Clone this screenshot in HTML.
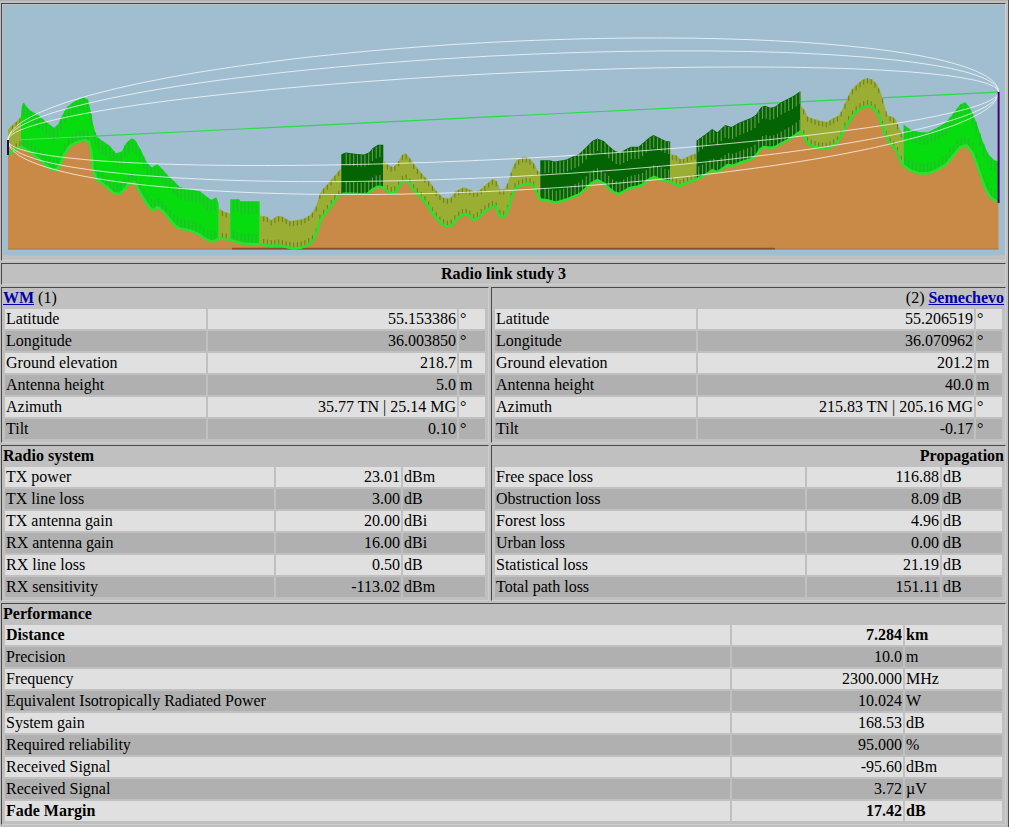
<!DOCTYPE html><html><head><meta charset="utf-8"><title>Radio link study 3</title><style>
html,body{margin:0;padding:0}
body{width:1009px;height:827px;position:relative;overflow:hidden;background:#c0c0c0;font-family:"Liberation Serif",serif;font-size:16px;line-height:18px;color:#000}
.c{position:absolute;box-sizing:border-box;border:1px solid;border-color:#484848 #cecece #cecece #484848}
.h{position:absolute;height:18px;white-space:nowrap}
.r{position:absolute;height:20px;box-sizing:border-box;padding:1px;white-space:nowrap;overflow:hidden}
.l{background:#e0e0e0}.k{background:#b0b0b0}
.v{text-align:right}
b{font-weight:bold}
a{color:#0000a8;text-decoration:underline}
</style></head><body>
<div style="position:absolute;left:0;top:0;width:1009px;height:1px;background:#b0b0b0"></div>
<div style="position:absolute;left:1008px;top:0;width:1px;height:827px;background:#505050"></div>
<div class="c" style="left:1px;top:3px;width:1005px;height:258px"></div>
<svg width="1002" height="251" viewBox="3 5 1002 251" style="position:absolute;left:3px;top:5px;display:block">
<rect x="3" y="5" width="1002" height="250.5" fill="#a0bed0"/>
<line x1="8" y1="140.3" x2="998.5" y2="92.2" stroke="#28dc48" stroke-width="1.2"/>
<polygon points="8,129.5 12.9,124.5 19.3,118.7 21,116 21,147.5 8,156" fill="#9aae34"/>
<polygon points="21,116 21.6,108 23.2,102.5 29.6,110 38.7,115.4 45,121 54,127.7 58,124.5 61.9,116 67,107 73.5,102 83.8,97.4 87.6,99.3 90.2,108.4 92.8,122.5 95.3,133 97.9,137.5 102.9,141.2 109.4,145.6 115.9,153.3 121.8,151.5 126,142.9 131.2,138.4 135,139.7 141.5,151.3 146.7,162.2 151.9,167.4 157,164 162,168.7 169.9,177.7 172.9,180 179.8,187 189.7,189.4 199.6,190.9 204.6,194.9 209.6,198.8 211.5,199.8 216.5,197.3 218.5,204 218.7,206.8 218.7,240.2 217.5,240.5 213.5,242.4 209.6,242 204.6,239.5 199.6,235.5 194.7,233.5 189.7,231.5 184.8,230.6 179.8,229.6 174.9,226.6 169.9,220.6 165,214.7 160,209.7 157,208.3 153,211.5 149.3,208.3 144,200.6 137.7,189 134.5,183.8 128.7,184.5 124.8,190.3 119.6,194.8 113.2,194 108,189 102.9,185 96.4,180 92.6,169.7 91.5,153 89,142.9 85,141 77.3,142.9 69.6,147.4 64.4,155 60.5,164.8 56.7,170.5 51.5,170.5 42.5,163.5 32,154.5 22,148 21,147.5" fill="#06dc0e"/>
<polygon points="218.7,208 219.5,208.7 224.4,211.7 229.4,213.2 230.2,213.5 230.2,241.2 229.4,241 221.4,239.5 218.7,240.2" fill="#9aae34"/>
<polygon points="230.2,199.3 239.3,199.3 240.3,201.3 259.7,201.3 259.7,245.4 251.5,245.2 241.3,244.4 239.3,243.4 230.2,241.2" fill="#06dc0e"/>
<polygon points="259.7,215.5 260.6,215.7 267,216.4 270.9,220.2 277.3,215.7 282.5,216.4 290.2,220.9 295.4,220.2 303.1,218.9 310.8,214.4 316,206.7 319.8,193.8 323.7,188 326.4,185.4 332.9,177.7 339.3,170 341.3,168.7 341.3,195.7 339.3,196.7 332.9,204.5 326.4,213.5 320,221.2 318.6,228.3 314.7,239.9 310.8,243.8 305.7,247 300.5,248.9 292.8,249.6 287.6,248.3 279.9,246.4 270.9,247 260.6,245.4 259.7,245.4" fill="#9aae34"/>
<polygon points="341.3,154.5 342.6,153.8 345.8,152.6 354.8,153.8 363.8,154.5 369,152.6 372.8,148 378,144.8 383.3,144.8 383.3,188.5 383.1,188.3 378,187.7 372.8,190.3 367.7,194.8 361.2,195.4 352.2,194.8 343.2,194.8 341.3,195.7" fill="#046404"/>
<polygon points="383.3,160.5 383.8,161 388.3,164.8 393.5,167.4 398.6,161 402.5,154.5 405.7,153.2 410.2,158.4 415.4,166 423.1,175 429.5,181.5 436,190.6 442.4,197 445.2,198.3 450.3,198.3 455.5,191.2 463.2,187.3 469.6,189.3 474.8,191.9 480,189.9 486.4,184.1 492.8,179 496.7,180.9 499.9,189.3 504.4,189.3 508.3,181.5 512.2,168.7 516,160.9 523.8,156.4 528.9,157.7 534.1,163.5 537.9,171.2 540.3,172.5 540.3,200.3 536.6,194.1 532.8,186.4 527.6,184.5 519.9,186.4 514.7,190.3 510.9,200.6 507,213.5 503.1,218.6 498.6,216 495.4,207 491.5,208.3 485.1,212.2 478.7,218.6 473.5,221.2 468.4,216 463.2,215.4 456.8,219.9 451.6,226.4 446.4,227.6 440,223.8 439.8,222.5 433.4,216 427,205.7 420.5,198 414,191.6 408.9,183.8 405,180.6 401.2,183.8 397.3,190.9 393.5,194.8 388.3,192.9 383.3,188.5" fill="#9aae34"/>
<polygon points="540.3,160.3 541.8,160.3 549.5,160.3 554.7,161.6 562.4,160.3 566.4,159.6 572.9,156.4 579.3,153.8 585.8,147.4 592.2,140.9 597.4,138.4 603.8,140.9 609,146.1 615.4,151.2 620.6,152.5 625.7,149.3 630.9,146.7 638.6,146.7 643.8,142.2 648.9,137.7 653.4,135.1 659.2,137.7 665.7,140.9 670.2,141.6 670.2,182.8 669.5,182.5 665.7,181.9 659.2,179.9 654.1,178 648.9,180.6 642.5,185.7 637.3,187.7 629.6,189 624.4,192.2 619.3,194.8 614.1,193.5 607.7,188.3 602.5,183.8 597.4,181.2 592.2,183.8 585.8,189.6 579.3,195.4 572.9,198 566.4,200.6 560,202.5 556,203.8 549.5,201.9 540.5,200.6 540.3,200.3" fill="#046404"/>
<polygon points="670.2,154.5 676,155.1 681.1,159.6 686.4,157.3 692.9,154.1 696.5,153.5 696.5,180.3 686.4,184 680,187 676,185.7 670.2,182.8" fill="#9aae34"/>
<polygon points="696.5,140.5 697.4,139.9 705.8,134.1 712.2,129 717.4,132.2 725.1,125.1 731.5,127 738,123.2 744.4,120.6 750.9,118 756,114.8 761.2,107 765,105.8 770.2,107.7 775.4,106.4 780.5,102.6 787,99.3 793.4,96.1 799.8,91.6 800.5,91.6 800.5,132.8 798.6,133.8 793.4,137.7 787,141.6 780.5,144.8 775.4,148 770.2,148.7 763.8,148 759.9,150.6 756,157 750.9,160.2 744.4,162.2 738,164.8 732.8,166.7 727.7,166 722.5,169.9 717.4,173.1 712.2,171.2 705.8,175.7 696.8,180.2 696.5,180.3" fill="#046404"/>
<polygon points="800.5,105 801.1,105.8 803.9,109 807.7,116.7 812.9,118.6 819.3,120.6 827,121.9 832.2,118.6 838.7,115.4 842.5,109 846.4,100 851.5,89.6 856.7,84.5 861.9,80 867,78 872.2,79.3 877.3,84.5 881.2,93.5 885.1,107.7 887.6,115.4 892.8,116.7 896,119.9 899.2,128.3 903.5,136 903.5,166.4 902,165.3 898,155.3 895.4,149.9 890.2,144.8 886.3,138.3 882.5,128 878.6,116.4 873.5,109.3 868.3,106.7 861.9,108.7 855.4,113.8 850.3,120.3 845.1,129.3 841.2,137 837.4,143.5 832.2,147.3 825.8,149.9 819.3,149.3 812.9,147.3 807.7,144.8 803.9,137.5 801,132.5 800.5,132.8" fill="#9aae34"/>
<polygon points="903.5,124.5 910,129.2 920,132.2 928,132.2 936.2,128.2 946.2,122.2 954.2,112.2 960.2,104.2 965.3,102.2 970.3,108.2 976.3,122.2 982.3,140.3 988.3,154.3 994.3,160.3 998.5,161.3 998.5,203.5 998.4,203.5 990.3,198.4 984.3,187.4 978.3,169.4 972.3,153.3 966.3,146.3 960.2,148.3 954.2,155.3 946.2,165.3 936.2,171.4 928,174.4 920,174.4 910,171.4 903.5,166.4" fill="#06dc0e"/>
<path d="M12.4 125.5v5M12.4 146.1v6M16.2 122v5M16.2 143.6v6M19.9 118.2v5M19.9 141.2v6" stroke="#6f7f28" stroke-width="1.1" fill="none"/>
<path d="M23.7 103.6v12M23.7 138.1v10M27.4 108v12M27.4 140.5v10M31.2 111.4v12M31.2 143v10M35 113.7v12M35 146v10M38.7 115.9v12M38.7 149.2v10M42.5 119.2v12M42.5 152.5v10M46.2 122.4v12M46.2 155.4v10M50 125.2v12M50 158.3v10M53.7 128v12M53.7 159.5v10M57.5 125.4v12M57.5 158.4v10M61.2 118v12M61.2 152v10M65 111.1v12M65 143.2v10M68.7 106.2v12M68.7 137.7v10M72.5 103.3v12M72.5 134.7v10M76.2 101.3v12M76.2 132.5v10M80 99.6v12M80 131.2v10M83.7 97.9v12M83.7 130.3v10M87.5 99.7v12M87.5 131.2v10M91.2 114.3v12M91.2 140.8v10M95 132v12M95 165.1v10M98.7 138.6v12M98.7 170.8v10M102.5 141.4v12M102.5 173.7v10M106.2 143.9v12M106.2 176.6v10M110 146.8v12M110 179.9v10M113.7 151.2v12M113.7 183.1v10M117.5 153.3v12M117.5 183.5v10M121.2 152.2v12M121.2 182.4v10M125 145.6v12M125 179.1v10M128.7 141.1v12M128.7 173.5v10M132.4 139.3v12M132.4 173v10M136.2 142.3v12M136.2 175.6v10M139.9 149v12M139.9 182.1v10M143.7 156.4v12M143.7 189v10M147.4 163.4v12M147.4 194.6v10M151.2 167.2v12M151.2 198.9v10M154.9 165.9v12M154.9 198.9v10M158.7 166.1v12M158.7 198.1v10M162.4 169.7v12M162.4 201.1v10M166.2 174v12M166.2 205.1v10M169.9 178.2v12M169.9 209.7v10M173.7 181.3v12M173.7 214.2v10M177.4 185.1v12M177.4 217.2v10M181.2 187.8v12M181.2 218.9v10M184.9 188.7v12M184.9 219.6v10M188.7 189.7v12M188.7 220.3v10M192.4 190.3v12M192.4 221.6v10M196.2 190.9v12M196.2 223.1v10M199.9 191.7v12M199.9 224.8v10M203.7 194.7v12M203.7 227.8v10M207.4 197.6v12M207.4 229.9v10M211.2 200.1v12M211.2 231.2v10M214.9 198.6v12M214.9 230.7v10" stroke="#22be2e" stroke-width="1.5" fill="none"/>
<path d="M222.4 211v5M222.4 232.7v6M226.2 212.7v5M226.2 233.4v6" stroke="#6f7f28" stroke-width="1.1" fill="none"/>
<path d="M233.7 199.8v12M233.7 231v10M237.4 199.8v12M237.4 232v10M241.2 201.8v12M241.2 233.3v10M244.9 201.8v12M244.9 233.7v10M248.7 201.8v12M248.7 234v10M252.4 201.8v12M252.4 234.2v10M256.2 201.8v12M256.2 234.3v10" stroke="#22be2e" stroke-width="1.5" fill="none"/>
<path d="M263.7 216.5v5M263.7 238.9v6M267.4 217.3v5M267.4 239.5v6M271.2 220.5v5M271.2 240v6M274.9 217.9v5M274.9 239.7v6M278.7 216.4v5M278.7 239.5v6M282.4 216.9v5M282.4 240v6M286.2 219.1v5M286.2 241v6M289.9 221.3v5M289.9 241.9v6M293.7 220.9v5M293.7 242.5v6M297.4 220.4v5M297.4 242.2v6M301.2 219.7v5M301.2 241.6v6M304.9 218.3v5M304.9 240.3v6M308.7 216.1v5M308.7 238.1v6M312.4 212.5v5M312.4 235.2v6M316.2 206.5v5M316.2 228.4v6M319.9 194.1v5M319.9 214.5v6M323.7 188.5v5M323.7 209.7v6M327.4 184.7v5M327.4 205v6M331.2 180.2v5M331.2 199.9v6M334.9 175.7v5M334.9 195v6M338.7 171.2v5M338.7 190.4v6" stroke="#6f7f28" stroke-width="1.1" fill="none"/>
<path d="M346.2 153.2v12M346.2 181.8v12M349.9 153.7v12M349.9 181.8v12M353.7 154.2v12M353.7 181.9v12M357.4 154.5v12M357.4 182.2v12M361.2 154.8v12M361.2 182.4v12M364.9 154.6v12M364.9 182.1v12M368.7 153.2v12M368.7 180.9v12M372.4 148.9v12M372.4 177.6v12M376.2 146.4v12M376.2 175.6v12M379.9 145.3v12M379.9 174.9v12" stroke="#669e4e" stroke-width="1.1" fill="none"/>
<path d="M387.4 164.6v5M387.4 185.1v6M391.2 166.8v5M391.2 187v6M394.9 166.1v5M394.9 186.3v6M398.7 161.3v5M398.7 181.4v6M402.4 155.1v5M402.4 175.7v6M406.2 154.3v5M406.2 174.6v6M409.9 158.6v5M409.9 178.4v6M413.7 164v5M413.7 184.1v6M417.4 168.9v5M417.4 188v6M421.2 173.3v5M421.2 191.8v6M424.9 177.4v5M424.9 196.3v6M428.7 181.2v5M428.7 201.4v6M432.4 186.1v5M432.4 207.5v6M436.2 191.3v5M436.2 211.8v6M439.9 195.1v5M439.9 216.5v6M443.7 198.1v5M443.7 219v6M447.4 198.8v5M447.4 220.4v6M451.2 197.6v5M451.2 219.5v6M454.9 192.5v5M454.9 215.2v6M458.7 190.1v5M458.7 211.6v6M462.4 188.2v5M462.4 208.9v6M466.2 188.7v5M466.2 208.7v6M469.9 190v5M469.9 210.6v6M473.7 191.8v5M473.7 214.1v6M477.4 191.4v5M477.4 212.2v6M481.2 189.3v5M481.2 209.1v6M484.9 185.9v5M484.9 205.4v6M488.7 182.8v5M488.7 203v6M492.4 179.8v5M492.4 201v6M496.2 181.2v5M496.2 202.2v6M499.9 189.8v5M499.9 209.8v6M503.7 189.8v5M503.7 210.8v6M507.4 183.7v5M507.4 205v6M511.2 172.5v5M511.2 192.8v6M515 163.6v5M515 183.1v6M518.7 159.8v5M518.7 180.3v6M522.5 157.7v5M522.5 178.8v6M526.2 157.5v5M526.2 177.8v6M530 159.4v5M530 178.4v6M533.7 163.6v5M533.7 181.2v6M537.5 170.8v5M537.5 188.5v6" stroke="#6f7f28" stroke-width="1.1" fill="none"/>
<path d="M545 160.8v12M545 188.2v12M548.7 160.8v12M548.7 188.8v12M552.5 161.5v12M552.5 189.8v12M556.2 161.8v12M556.2 190.7v12M560 161.2v12M560 189.5v12M563.7 160.6v12M563.7 188.4v12M567.5 159.6v12M567.5 187.2v12M571.2 157.7v12M571.2 185.7v12M575 156.1v12M575 184.2v12M578.7 154.5v12M578.7 182.6v12M582.5 151.2v12M582.5 179.6v12M586.2 147.5v12M586.2 176.2v12M590 143.7v12M590 172.8v12M593.7 140.7v12M593.7 170v12M597.5 138.9v12M597.5 168.2v12M601.2 140.4v12M601.2 170.1v12M605 142.6v12M605 172.9v12M608.7 146.3v12M608.7 176.1v12M612.5 149.3v12M612.5 179.2v12M616.2 151.9v12M616.2 181v12M620 152.8v12M620 181.5v12M623.7 151.1v12M623.7 179.6v12M627.5 148.9v12M627.5 177.3v12M631.2 147.2v12M631.2 175.7v12M635 147.2v12M635 175.1v12M638.7 147.1v12M638.7 174.2v12M642.5 143.9v12M642.5 172.7v12M646.2 140.6v12M646.2 169.8v12M650 137.6v12M650 167.1v12M653.7 135.7v12M653.7 165.2v12M657.5 137.4v12M657.5 166.2v12M661.2 139.2v12M661.2 167.5v12M665 141v12M665 168.7v12M668.7 141.9v12M668.7 169.4v12" stroke="#669e4e" stroke-width="1.1" fill="none"/>
<path d="M672.5 155.2v5M672.5 177v6M676.2 155.8v5M676.2 178.8v6M680 159.1v5M680 180v6M683.7 159v5M683.7 178.3v6M687.5 157.3v5M687.5 176.6v6M691.2 155.4v5M691.2 175.2v6M695 154.3v5M695 173.9v6" stroke="#6f7f28" stroke-width="1.1" fill="none"/>
<path d="M698.7 139.5v12M698.7 166.2v12M702.5 136.9v12M702.5 164.4v12M706.2 134.3v12M706.2 162.4v12M710 131.3v12M710 159.8v12M713.7 130.4v12M713.7 158.7v12M717.5 132.7v12M717.5 160.1v12M721.2 129.2v12M721.2 157.7v12M725 125.7v12M725 155.1v12M728.7 126.7v12M728.7 153.1v12M732.5 126.9v12M732.5 153.7v12M736.2 124.8v12M736.2 152.5v12M740 122.9v12M740 151v12M743.7 121.4v12M743.7 149.5v12M747.5 119.9v12M747.5 148.3v12M751.2 118.3v12M751.2 147v12M755 116v12M755 144.7v12M758.7 111.2v12M758.7 139.6v12M762.5 107.1v12M762.5 135.9v12M766.2 106.7v12M766.2 135.3v12M770 108.1v12M770 135.7v12M773.7 107.3v12M773.7 135.2v12M777.5 105.4v12M777.5 133.7v12M781.2 102.7v12M781.2 131.5v12M785 100.8v12M785 129.6v12M788.7 98.9v12M788.7 127.6v12M792.5 97.1v12M792.5 125.3v12M796.2 94.6v12M796.2 122.6v12M800 92.1v12M800 120.1v12" stroke="#669e4e" stroke-width="1.1" fill="none"/>
<path d="M803.7 109.3v5M803.7 130.2v6M807.5 116.7v5M807.5 137.3v6M811.2 118.5v5M811.2 139.5v6M815 119.7v5M815 140.9v6M818.7 120.9v5M818.7 142.1v6M822.5 121.6v5M822.5 142.6v6M826.2 122.3v5M826.2 142.7v6M830 120.5v5M830 141.2v6M833.7 118.4v5M833.7 139.2v6M837.5 116.5v5M837.5 136.4v6M841.2 111.7v5M841.2 130v6M845 103.8v5M845 122.6v6M848.7 95.8v5M848.7 116.1v6M852.5 89.2v5M852.5 110.6v6M856.2 85.5v5M856.2 106.2v6M860 82.2v5M860 103.2v6M863.7 79.8v5M863.7 101.1v6M867.5 78.6v5M867.5 100v6M871.2 79.5v5M871.2 101.2v6M875 82.6v5M875 104.3v6M878.7 88.2v5M878.7 109.7v6M882.5 98.6v5M882.5 120.9v6M886.2 111.6v5M886.2 131v6M890 116.5v5M890 137.4v6M893.7 118.1v5M893.7 141.2v6M897.5 124.2v5M897.5 147.2v6M901.2 132.4v5M901.2 156.3v6" stroke="#6f7f28" stroke-width="1.1" fill="none"/>
<path d="M905 126v12M905 156.5v10M908.7 128.8v12M908.7 159.4v10M912.5 130.4v12M912.5 161.1v10M916.2 131.6v12M916.2 162.3v10M920 132.7v12M920 163.4v10M923.7 132.7v12M923.7 163.4v10M927.5 132.7v12M927.5 163.4v10M931.2 131.1v12M931.2 162.2v10M935 129.3v12M935 160.9v10M938.7 127.2v12M938.7 158.9v10M942.5 125v12M942.5 156.6v10M946.2 122.7v12M946.2 154.3v10M950 118v12M950 149.6v10M953.7 113.3v12M953.7 144.9v10M957.5 108.4v12M957.5 140.5v10M961.2 104.3v12M961.2 137v10M965 102.8v12M965 135.7v10M968.7 106.8v12M968.7 138.1v10M972.5 113.7v12M972.5 142.7v10M976.2 122.5v12M976.2 152.8v10M980 133.7v12M980 163.4v10M983.7 144.1v12M983.7 174.6v10M987.5 152.8v12M987.5 182.2v10M991.2 157.7v12M991.2 188v10M995 161v12M995 190.3v10" stroke="#22be2e" stroke-width="1.5" fill="none"/>
<polygon points="8,155 21,146.5 22,147 32,153.5 42.5,162.5 51.5,169.5 56.7,169.5 60.5,163.8 64.4,154 69.6,146.4 77.3,141.9 85,140 89,141.9 91.5,152 92.6,168.7 96.4,179 102.9,184 108,188 113.2,193 119.6,193.8 124.8,189.3 128.7,183.5 134.5,182.8 137.7,188 144,199.6 149.3,207.3 153,210.5 157,207.3 160,208.7 165,213.7 169.9,219.6 174.9,225.6 179.8,228.6 184.8,229.6 189.7,230.5 194.7,232.5 199.6,234.5 204.6,238.5 209.6,241 213.5,241.4 217.5,239.5 221.4,238.5 229.4,240 239.3,242.4 241.3,243.4 251.5,244.2 260.6,244.4 270.9,246 279.9,245.4 287.6,247.3 292.8,248.6 300.5,247.9 305.7,246 310.8,242.8 314.7,238.9 318.6,227.3 320,220.2 326.4,212.5 332.9,203.5 339.3,195.7 343.2,193.8 352.2,193.8 361.2,194.4 367.7,193.8 372.8,189.3 378,186.7 383.1,187.3 388.3,191.9 393.5,193.8 397.3,189.9 401.2,182.8 405,179.6 408.9,182.8 414,190.6 420.5,197 427,204.7 433.4,215 439.8,221.5 440,222.8 446.4,226.6 451.6,225.4 456.8,218.9 463.2,214.4 468.4,215 473.5,220.2 478.7,217.6 485.1,211.2 491.5,207.3 495.4,206 498.6,215 503.1,217.6 507,212.5 510.9,199.6 514.7,189.3 519.9,185.4 527.6,183.5 532.8,185.4 536.6,193.1 540.5,199.6 549.5,200.9 556,202.8 560,201.5 566.4,199.6 572.9,197 579.3,194.4 585.8,188.6 592.2,182.8 597.4,180.2 602.5,182.8 607.7,187.3 614.1,192.5 619.3,193.8 624.4,191.2 629.6,188 637.3,186.7 642.5,184.7 648.9,179.6 654.1,177 659.2,178.9 665.7,180.9 669.5,181.5 676,184.7 680,186 686.4,183 696.8,179.2 705.8,174.7 712.2,170.2 717.4,172.1 722.5,168.9 727.7,165 732.8,165.7 738,163.8 744.4,161.2 750.9,159.2 756,156 759.9,149.6 763.8,147 770.2,147.7 775.4,147 780.5,143.8 787,140.6 793.4,136.7 798.6,132.8 801,131.5 803.9,136.5 807.7,143.8 812.9,146.3 819.3,148.3 825.8,148.9 832.2,146.3 837.4,142.5 841.2,136 845.1,128.3 850.3,119.3 855.4,112.8 861.9,107.7 868.3,105.7 873.5,108.3 878.6,115.4 882.5,127 886.3,137.3 890.2,143.8 895.4,148.9 898,154.3 902,164.3 910,170.4 920,173.4 928,173.4 936.2,170.4 946.2,164.3 954.2,154.3 960.2,147.3 966.3,145.3 972.3,152.3 978.3,168.4 984.3,186.4 990.3,197.4 998.4,202.5 998.5,249.5 8,249.5" fill="#c98a48"/>
<path d="M8 248.9H998.5" stroke="#b07a40" stroke-width="1"/>
<path d="M232 248.6H775" stroke="#8a4f28" stroke-width="1.7"/>
<polyline points="8,155 21,146.5 22,147 32,153.5 42.5,162.5 51.5,169.5 56.7,169.5 60.5,163.8 64.4,154 69.6,146.4 77.3,141.9 85,140 89,141.9 91.5,152 92.6,168.7 96.4,179 102.9,184 108,188 113.2,193 119.6,193.8 124.8,189.3 128.7,183.5 134.5,182.8 137.7,188 144,199.6 149.3,207.3 153,210.5 157,207.3 160,208.7 165,213.7 169.9,219.6 174.9,225.6 179.8,228.6 184.8,229.6 189.7,230.5 194.7,232.5 199.6,234.5 204.6,238.5 209.6,241 213.5,241.4 217.5,239.5 221.4,238.5 229.4,240 239.3,242.4 241.3,243.4 251.5,244.2 260.6,244.4 270.9,246 279.9,245.4 287.6,247.3 292.8,248.6 300.5,247.9 305.7,246 310.8,242.8 314.7,238.9 318.6,227.3 320,220.2 326.4,212.5 332.9,203.5 339.3,195.7 343.2,193.8 352.2,193.8 361.2,194.4 367.7,193.8 372.8,189.3 378,186.7 383.1,187.3 388.3,191.9 393.5,193.8 397.3,189.9 401.2,182.8 405,179.6 408.9,182.8 414,190.6 420.5,197 427,204.7 433.4,215 439.8,221.5 440,222.8 446.4,226.6 451.6,225.4 456.8,218.9 463.2,214.4 468.4,215 473.5,220.2 478.7,217.6 485.1,211.2 491.5,207.3 495.4,206 498.6,215 503.1,217.6 507,212.5 510.9,199.6 514.7,189.3 519.9,185.4 527.6,183.5 532.8,185.4 536.6,193.1 540.5,199.6 549.5,200.9 556,202.8 560,201.5 566.4,199.6 572.9,197 579.3,194.4 585.8,188.6 592.2,182.8 597.4,180.2 602.5,182.8 607.7,187.3 614.1,192.5 619.3,193.8 624.4,191.2 629.6,188 637.3,186.7 642.5,184.7 648.9,179.6 654.1,177 659.2,178.9 665.7,180.9 669.5,181.5 676,184.7 680,186 686.4,183 696.8,179.2 705.8,174.7 712.2,170.2 717.4,172.1 722.5,168.9 727.7,165 732.8,165.7 738,163.8 744.4,161.2 750.9,159.2 756,156 759.9,149.6 763.8,147 770.2,147.7 775.4,147 780.5,143.8 787,140.6 793.4,136.7 798.6,132.8 801,131.5 803.9,136.5 807.7,143.8 812.9,146.3 819.3,148.3 825.8,148.9 832.2,146.3 837.4,142.5 841.2,136 845.1,128.3 850.3,119.3 855.4,112.8 861.9,107.7 868.3,105.7 873.5,108.3 878.6,115.4 882.5,127 886.3,137.3 890.2,143.8 895.4,148.9 898,154.3 902,164.3 910,170.4 920,173.4 928,173.4 936.2,170.4 946.2,164.3 954.2,154.3 960.2,147.3 966.3,145.3 972.3,152.3 978.3,168.4 984.3,186.4 990.3,197.4 998.4,202.5" fill="none" stroke="#2ee02e" stroke-width="2.6" stroke-linejoin="round"/>
<polygon points="8,140.3 8.1,139.6 8.2,138.9 8.5,138.2 9,137.6 9.5,136.9 10.2,136.1 11,135.4 11.9,134.7 12.9,134 14.1,133.3 15.4,132.5 16.8,131.8 18.3,131.1 19.9,130.3 21.7,129.6 23.6,128.9 25.6,128.1 27.7,127.3 29.9,126.6 32.2,125.8 34.7,125.1 37.3,124.3 40,123.5 42.8,122.8 45.7,122 48.7,121.2 51.9,120.5 55.1,119.7 58.5,118.9 62,118.2 65.6,117.4 69.3,116.6 73.1,115.8 77,115.1 81,114.3 85.1,113.5 89.3,112.7 93.6,112 98.1,111.2 102.6,110.4 107.2,109.7 111.9,108.9 116.7,108.1 121.7,107.4 126.7,106.6 131.8,105.9 136.9,105.1 142.2,104.3 147.6,103.6 153.1,102.9 158.6,102.1 164.2,101.4 169.9,100.6 175.7,99.9 181.6,99.2 187.6,98.4 193.6,97.7 199.7,97 205.9,96.3 212.1,95.6 218.5,94.9 224.9,94.2 231.3,93.5 237.9,92.8 244.5,92.2 251.1,91.5 257.9,90.8 264.7,90.2 271.5,89.5 278.4,88.9 285.4,88.2 292.4,87.6 299.4,87 306.6,86.3 313.7,85.7 320.9,85.1 328.2,84.5 335.5,83.9 342.8,83.4 350.2,82.8 357.6,82.2 365.1,81.7 372.6,81.1 380.1,80.6 387.6,80.1 395.2,79.5 402.8,79 410.4,78.5 418.1,78 425.8,77.5 433.5,77.1 441.2,76.6 448.9,76.1 456.6,75.7 464.4,75.3 472.2,74.8 479.9,74.4 487.7,74 495.5,73.6 503.2,73.3 511,72.9 518.8,72.5 526.6,72.2 534.3,71.8 542.1,71.5 549.9,71.2 557.6,70.9 565.3,70.6 573,70.3 580.7,70 588.4,69.8 596.1,69.5 603.7,69.3 611.3,69 618.9,68.8 626.4,68.6 633.9,68.4 641.4,68.2 648.9,68.1 656.3,67.9 663.7,67.8 671,67.6 678.3,67.5 685.6,67.4 692.8,67.3 699.9,67.2 707.1,67.2 714.1,67.1 721.1,67.1 728.1,67 735,67 741.8,67 748.6,67 755.4,67 762,67 768.6,67.1 775.2,67.1 781.6,67.2 788,67.2 794.4,67.3 800.6,67.4 806.8,67.5 812.9,67.7 818.9,67.8 824.9,67.9 830.8,68.1 836.6,68.3 842.3,68.4 847.9,68.6 853.4,68.8 858.9,69.1 864.3,69.3 869.6,69.5 874.7,69.8 879.8,70 884.8,70.3 889.8,70.6 894.6,70.9 899.3,71.2 903.9,71.5 908.4,71.8 912.9,72.2 917.2,72.5 921.4,72.9 925.5,73.3 929.5,73.7 933.4,74.1 937.2,74.5 940.9,74.9 944.5,75.3 948,75.7 951.4,76.2 954.6,76.6 957.8,77.1 960.8,77.6 963.7,78.1 966.5,78.6 969.2,79.1 971.8,79.6 974.3,80.1 976.6,80.6 978.8,81.2 980.9,81.7 982.9,82.3 984.8,82.8 986.6,83.4 988.2,84 989.7,84.6 991.1,85.2 992.4,85.8 993.6,86.4 994.6,87 995.5,87.6 996.3,88.3 997,88.9 997.5,89.5 998,90.2 998.3,90.9 998.4,91.5 998.5,92.2 998.5,92.2 998.4,92.9 998.3,93.6 998,94.3 997.5,94.9 997,95.6 996.3,96.4 995.5,97.1 994.6,97.8 993.6,98.5 992.4,99.2 991.1,100 989.7,100.7 988.2,101.4 986.6,102.2 984.8,102.9 982.9,103.6 980.9,104.4 978.8,105.2 976.6,105.9 974.3,106.7 971.8,107.4 969.2,108.2 966.5,109 963.7,109.7 960.8,110.5 957.8,111.3 954.6,112 951.4,112.8 948,113.6 944.5,114.3 940.9,115.1 937.2,115.9 933.4,116.7 929.5,117.4 925.5,118.2 921.4,119 917.2,119.8 912.9,120.5 908.4,121.3 903.9,122.1 899.3,122.8 894.6,123.6 889.8,124.4 884.8,125.1 879.8,125.9 874.7,126.6 869.6,127.4 864.3,128.2 858.9,128.9 853.4,129.6 847.9,130.4 842.3,131.1 836.6,131.9 830.8,132.6 824.9,133.3 818.9,134.1 812.9,134.8 806.8,135.5 800.6,136.2 794.4,136.9 788,137.6 781.6,138.3 775.2,139 768.6,139.7 762,140.3 755.4,141 748.6,141.7 741.8,142.3 735,143 728.1,143.6 721.1,144.3 714.1,144.9 707.1,145.5 699.9,146.2 692.8,146.8 685.6,147.4 678.3,148 671,148.6 663.7,149.1 656.3,149.7 648.9,150.3 641.4,150.8 633.9,151.4 626.4,151.9 618.9,152.4 611.3,153 603.7,153.5 596.1,154 588.4,154.5 580.7,155 573,155.4 565.3,155.9 557.6,156.4 549.9,156.8 542.1,157.2 534.3,157.7 526.6,158.1 518.8,158.5 511,158.9 503.2,159.2 495.5,159.6 487.7,160 479.9,160.3 472.2,160.7 464.4,161 456.6,161.3 448.9,161.6 441.2,161.9 433.5,162.2 425.8,162.5 418.1,162.7 410.4,163 402.8,163.2 395.2,163.5 387.6,163.7 380.1,163.9 372.6,164.1 365.1,164.3 357.6,164.4 350.2,164.6 342.8,164.7 335.5,164.9 328.2,165 320.9,165.1 313.7,165.2 306.6,165.3 299.4,165.3 292.4,165.4 285.4,165.4 278.4,165.5 271.5,165.5 264.7,165.5 257.9,165.5 251.1,165.5 244.5,165.5 237.9,165.4 231.3,165.4 224.9,165.3 218.5,165.3 212.1,165.2 205.9,165.1 199.7,165 193.6,164.8 187.6,164.7 181.6,164.6 175.7,164.4 169.9,164.2 164.2,164.1 158.6,163.9 153.1,163.7 147.6,163.4 142.2,163.2 136.9,163 131.8,162.7 126.7,162.5 121.7,162.2 116.7,161.9 111.9,161.6 107.2,161.3 102.6,161 98.1,160.7 93.6,160.3 89.3,160 85.1,159.6 81,159.2 77,158.8 73.1,158.4 69.3,158 65.6,157.6 62,157.2 58.5,156.8 55.1,156.3 51.9,155.9 48.7,155.4 45.7,154.9 42.8,154.4 40,153.9 37.3,153.4 34.7,152.9 32.2,152.4 29.9,151.9 27.7,151.3 25.6,150.8 23.6,150.2 21.7,149.7 19.9,149.1 18.3,148.5 16.8,147.9 15.4,147.3 14.1,146.7 12.9,146.1 11.9,145.5 11,144.9 10.2,144.2 9.5,143.6 9,143 8.5,142.3 8.2,141.6 8.1,141 8,140.3" fill="none" stroke="#ffffff" stroke-width="0.8" stroke-opacity="0.9"/>
<polygon points="8,140.3 8.1,139.3 8.2,138.4 8.5,137.4 9,136.4 9.5,135.5 10.2,134.5 11,133.5 11.9,132.5 12.9,131.5 14.1,130.5 15.4,129.5 16.8,128.5 18.3,127.5 19.9,126.5 21.7,125.4 23.6,124.4 25.6,123.4 27.7,122.4 29.9,121.4 32.2,120.3 34.7,119.3 37.3,118.3 40,117.3 42.8,116.2 45.7,115.2 48.7,114.2 51.9,113.1 55.1,112.1 58.5,111.1 62,110.1 65.6,109.1 69.3,108 73.1,107 77,106 81,105 85.1,104 89.3,103 93.6,102 98.1,101 102.6,100 107.2,99 111.9,98 116.7,97 121.7,96 126.7,95.1 131.8,94.1 136.9,93.1 142.2,92.2 147.6,91.2 153.1,90.3 158.6,89.3 164.2,88.4 169.9,87.5 175.7,86.5 181.6,85.6 187.6,84.7 193.6,83.8 199.7,82.9 205.9,82.1 212.1,81.2 218.5,80.3 224.9,79.5 231.3,78.6 237.9,77.8 244.5,77 251.1,76.2 257.9,75.4 264.7,74.6 271.5,73.8 278.4,73 285.4,72.2 292.4,71.5 299.4,70.7 306.6,70 313.7,69.3 320.9,68.6 328.2,67.9 335.5,67.2 342.8,66.5 350.2,65.9 357.6,65.2 365.1,64.6 372.6,64 380.1,63.3 387.6,62.7 395.2,62.2 402.8,61.6 410.4,61 418.1,60.5 425.8,60 433.5,59.4 441.2,58.9 448.9,58.5 456.6,58 464.4,57.5 472.2,57.1 479.9,56.7 487.7,56.2 495.5,55.8 503.2,55.5 511,55.1 518.8,54.7 526.6,54.4 534.3,54.1 542.1,53.8 549.9,53.5 557.6,53.2 565.3,52.9 573,52.7 580.7,52.4 588.4,52.2 596.1,52 603.7,51.8 611.3,51.7 618.9,51.5 626.4,51.4 633.9,51.3 641.4,51.2 648.9,51.1 656.3,51 663.7,50.9 671,50.9 678.3,50.9 685.6,50.9 692.8,50.9 699.9,50.9 707.1,50.9 714.1,51 721.1,51.1 728.1,51.2 735,51.3 741.8,51.4 748.6,51.5 755.4,51.7 762,51.8 768.6,52 775.2,52.2 781.6,52.4 788,52.7 794.4,52.9 800.6,53.2 806.8,53.5 812.9,53.8 818.9,54.1 824.9,54.4 830.8,54.7 836.6,55.1 842.3,55.5 847.9,55.9 853.4,56.3 858.9,56.7 864.3,57.1 869.6,57.5 874.7,58 879.8,58.5 884.8,59 889.8,59.5 894.6,60 899.3,60.5 903.9,61.1 908.4,61.6 912.9,62.2 917.2,62.8 921.4,63.4 925.5,64 929.5,64.6 933.4,65.2 937.2,65.9 940.9,66.5 944.5,67.2 948,67.9 951.4,68.6 954.6,69.3 957.8,70 960.8,70.8 963.7,71.5 966.5,72.3 969.2,73 971.8,73.8 974.3,74.6 976.6,75.4 978.8,76.2 980.9,77 982.9,77.8 984.8,78.7 986.6,79.5 988.2,80.4 989.7,81.2 991.1,82.1 992.4,83 993.6,83.9 994.6,84.8 995.5,85.7 996.3,86.6 997,87.5 997.5,88.4 998,89.4 998.3,90.3 998.4,91.2 998.5,92.2 998.5,92.2 998.4,93.2 998.3,94.1 998,95.1 997.5,96.1 997,97 996.3,98 995.5,99 994.6,100 993.6,101 992.4,102 991.1,103 989.7,104 988.2,105 986.6,106 984.8,107.1 982.9,108.1 980.9,109.1 978.8,110.1 976.6,111.1 974.3,112.2 971.8,113.2 969.2,114.2 966.5,115.2 963.7,116.3 960.8,117.3 957.8,118.3 954.6,119.4 951.4,120.4 948,121.4 944.5,122.4 940.9,123.4 937.2,124.5 933.4,125.5 929.5,126.5 925.5,127.5 921.4,128.5 917.2,129.5 912.9,130.5 908.4,131.5 903.9,132.5 899.3,133.5 894.6,134.5 889.8,135.5 884.8,136.5 879.8,137.4 874.7,138.4 869.6,139.4 864.3,140.3 858.9,141.3 853.4,142.2 847.9,143.2 842.3,144.1 836.6,145 830.8,146 824.9,146.9 818.9,147.8 812.9,148.7 806.8,149.6 800.6,150.4 794.4,151.3 788,152.2 781.6,153 775.2,153.9 768.6,154.7 762,155.5 755.4,156.3 748.6,157.1 741.8,157.9 735,158.7 728.1,159.5 721.1,160.3 714.1,161 707.1,161.8 699.9,162.5 692.8,163.2 685.6,163.9 678.3,164.6 671,165.3 663.7,166 656.3,166.6 648.9,167.3 641.4,167.9 633.9,168.5 626.4,169.2 618.9,169.8 611.3,170.3 603.7,170.9 596.1,171.5 588.4,172 580.7,172.5 573,173.1 565.3,173.6 557.6,174 549.9,174.5 542.1,175 534.3,175.4 526.6,175.8 518.8,176.3 511,176.7 503.2,177.1 495.5,177.4 487.7,177.8 479.9,178.1 472.2,178.4 464.4,178.7 456.6,179 448.9,179.3 441.2,179.6 433.5,179.8 425.8,180.1 418.1,180.3 410.4,180.5 402.8,180.7 395.2,180.8 387.6,181 380.1,181.1 372.6,181.2 365.1,181.3 357.6,181.4 350.2,181.5 342.8,181.6 335.5,181.6 328.2,181.6 320.9,181.6 313.7,181.6 306.6,181.6 299.4,181.6 292.4,181.5 285.4,181.4 278.4,181.3 271.5,181.2 264.7,181.1 257.9,181 251.1,180.8 244.5,180.7 237.9,180.5 231.3,180.3 224.9,180.1 218.5,179.8 212.1,179.6 205.9,179.3 199.7,179 193.6,178.7 187.6,178.4 181.6,178.1 175.7,177.8 169.9,177.4 164.2,177 158.6,176.6 153.1,176.2 147.6,175.8 142.2,175.4 136.9,175 131.8,174.5 126.7,174 121.7,173.5 116.7,173 111.9,172.5 107.2,172 102.6,171.4 98.1,170.9 93.6,170.3 89.3,169.7 85.1,169.1 81,168.5 77,167.9 73.1,167.3 69.3,166.6 65.6,166 62,165.3 58.5,164.6 55.1,163.9 51.9,163.2 48.7,162.5 45.7,161.7 42.8,161 40,160.2 37.3,159.5 34.7,158.7 32.2,157.9 29.9,157.1 27.7,156.3 25.6,155.5 23.6,154.7 21.7,153.8 19.9,153 18.3,152.1 16.8,151.3 15.4,150.4 14.1,149.5 12.9,148.6 11.9,147.7 11,146.8 10.2,145.9 9.5,145 9,144.1 8.5,143.1 8.2,142.2 8.1,141.3 8,140.3" fill="none" stroke="#ffffff" stroke-width="0.8" stroke-opacity="0.9"/>
<polygon points="8,140.3 8.1,139.1 8.2,137.9 8.5,136.8 9,135.6 9.5,134.4 10.2,133.2 11,132 11.9,130.8 12.9,129.6 14.1,128.3 15.4,127.1 16.8,125.9 18.3,124.7 19.9,123.5 21.7,122.2 23.6,121 25.6,119.8 27.7,118.6 29.9,117.3 32.2,116.1 34.7,114.9 37.3,113.6 40,112.4 42.8,111.2 45.7,110 48.7,108.7 51.9,107.5 55.1,106.3 58.5,105.1 62,103.9 65.6,102.6 69.3,101.4 73.1,100.2 77,99 81,97.8 85.1,96.6 89.3,95.4 93.6,94.3 98.1,93.1 102.6,91.9 107.2,90.8 111.9,89.6 116.7,88.4 121.7,87.3 126.7,86.2 131.8,85 136.9,83.9 142.2,82.8 147.6,81.7 153.1,80.6 158.6,79.5 164.2,78.4 169.9,77.3 175.7,76.3 181.6,75.2 187.6,74.2 193.6,73.1 199.7,72.1 205.9,71.1 212.1,70.1 218.5,69.1 224.9,68.2 231.3,67.2 237.9,66.2 244.5,65.3 251.1,64.4 257.9,63.5 264.7,62.6 271.5,61.7 278.4,60.8 285.4,59.9 292.4,59.1 299.4,58.2 306.6,57.4 313.7,56.6 320.9,55.8 328.2,55.1 335.5,54.3 342.8,53.6 350.2,52.8 357.6,52.1 365.1,51.4 372.6,50.7 380.1,50.1 387.6,49.4 395.2,48.8 402.8,48.2 410.4,47.6 418.1,47 425.8,46.4 433.5,45.9 441.2,45.4 448.9,44.8 456.6,44.3 464.4,43.9 472.2,43.4 479.9,43 487.7,42.5 495.5,42.1 503.2,41.8 511,41.4 518.8,41 526.6,40.7 534.3,40.4 542.1,40.1 549.9,39.8 557.6,39.6 565.3,39.3 573,39.1 580.7,38.9 588.4,38.7 596.1,38.6 603.7,38.4 611.3,38.3 618.9,38.2 626.4,38.1 633.9,38 641.4,38 648.9,38 656.3,38 663.7,38 671,38 678.3,38.1 685.6,38.1 692.8,38.2 699.9,38.3 707.1,38.5 714.1,38.6 721.1,38.8 728.1,39 735,39.2 741.8,39.4 748.6,39.6 755.4,39.9 762,40.2 768.6,40.5 775.2,40.8 781.6,41.1 788,41.5 794.4,41.8 800.6,42.2 806.8,42.6 812.9,43.1 818.9,43.5 824.9,44 830.8,44.5 836.6,45 842.3,45.5 847.9,46 853.4,46.6 858.9,47.1 864.3,47.7 869.6,48.3 874.7,48.9 879.8,49.6 884.8,50.2 889.8,50.9 894.6,51.6 899.3,52.3 903.9,53 908.4,53.7 912.9,54.5 917.2,55.2 921.4,56 925.5,56.8 929.5,57.6 933.4,58.4 937.2,59.3 940.9,60.1 944.5,61 948,61.9 951.4,62.8 954.6,63.7 957.8,64.6 960.8,65.5 963.7,66.5 966.5,67.4 969.2,68.4 971.8,69.4 974.3,70.4 976.6,71.4 978.8,72.4 980.9,73.4 982.9,74.4 984.8,75.5 986.6,76.5 988.2,77.6 989.7,78.7 991.1,79.7 992.4,80.8 993.6,81.9 994.6,83.1 995.5,84.2 996.3,85.3 997,86.4 997.5,87.6 998,88.7 998.3,89.9 998.4,91 998.5,92.2 998.5,92.2 998.4,93.4 998.3,94.6 998,95.7 997.5,96.9 997,98.1 996.3,99.3 995.5,100.5 994.6,101.7 993.6,102.9 992.4,104.2 991.1,105.4 989.7,106.6 988.2,107.8 986.6,109 984.8,110.3 982.9,111.5 980.9,112.7 978.8,113.9 976.6,115.2 974.3,116.4 971.8,117.6 969.2,118.9 966.5,120.1 963.7,121.3 960.8,122.5 957.8,123.8 954.6,125 951.4,126.2 948,127.4 944.5,128.6 940.9,129.9 937.2,131.1 933.4,132.3 929.5,133.5 925.5,134.7 921.4,135.9 917.2,137.1 912.9,138.2 908.4,139.4 903.9,140.6 899.3,141.7 894.6,142.9 889.8,144.1 884.8,145.2 879.8,146.3 874.7,147.5 869.6,148.6 864.3,149.7 858.9,150.8 853.4,151.9 847.9,153 842.3,154.1 836.6,155.2 830.8,156.2 824.9,157.3 818.9,158.3 812.9,159.4 806.8,160.4 800.6,161.4 794.4,162.4 788,163.4 781.6,164.3 775.2,165.3 768.6,166.3 762,167.2 755.4,168.1 748.6,169 741.8,169.9 735,170.8 728.1,171.7 721.1,172.6 714.1,173.4 707.1,174.3 699.9,175.1 692.8,175.9 685.6,176.7 678.3,177.4 671,178.2 663.7,178.9 656.3,179.7 648.9,180.4 641.4,181.1 633.9,181.8 626.4,182.4 618.9,183.1 611.3,183.7 603.7,184.3 596.1,184.9 588.4,185.5 580.7,186.1 573,186.6 565.3,187.1 557.6,187.7 549.9,188.2 542.1,188.6 534.3,189.1 526.6,189.5 518.8,190 511,190.4 503.2,190.8 495.5,191.1 487.7,191.5 479.9,191.8 472.2,192.1 464.4,192.4 456.6,192.7 448.9,192.9 441.2,193.2 433.5,193.4 425.8,193.6 418.1,193.8 410.4,193.9 402.8,194.1 395.2,194.2 387.6,194.3 380.1,194.4 372.6,194.5 365.1,194.5 357.6,194.5 350.2,194.5 342.8,194.5 335.5,194.5 328.2,194.4 320.9,194.4 313.7,194.3 306.6,194.2 299.4,194 292.4,193.9 285.4,193.7 278.4,193.5 271.5,193.3 264.7,193.1 257.9,192.9 251.1,192.6 244.5,192.3 237.9,192 231.3,191.7 224.9,191.4 218.5,191 212.1,190.7 205.9,190.3 199.7,189.9 193.6,189.4 187.6,189 181.6,188.5 175.7,188 169.9,187.5 164.2,187 158.6,186.5 153.1,185.9 147.6,185.4 142.2,184.8 136.9,184.2 131.8,183.6 126.7,182.9 121.7,182.3 116.7,181.6 111.9,180.9 107.2,180.2 102.6,179.5 98.1,178.8 93.6,178 89.3,177.3 85.1,176.5 81,175.7 77,174.9 73.1,174.1 69.3,173.2 65.6,172.4 62,171.5 58.5,170.6 55.1,169.7 51.9,168.8 48.7,167.9 45.7,167 42.8,166 40,165.1 37.3,164.1 34.7,163.1 32.2,162.1 29.9,161.1 27.7,160.1 25.6,159.1 23.6,158.1 21.7,157 19.9,156 18.3,154.9 16.8,153.8 15.4,152.8 14.1,151.7 12.9,150.6 11.9,149.4 11,148.3 10.2,147.2 9.5,146.1 9,144.9 8.5,143.8 8.2,142.6 8.1,141.5 8,140.3" fill="none" stroke="#ffffff" stroke-width="0.8" stroke-opacity="0.9"/>
<line x1="21" y1="139.7" x2="97" y2="136" stroke="#7cf08a" stroke-width="1.1" stroke-opacity="0.55"/>
<rect x="7" y="140" width="2" height="15" fill="#3a0050"/>
<rect x="997.6" y="92" width="2" height="111" fill="#4a0070"/>
</svg>
<div class="c" style="left:1px;top:263px;width:1005px;height:22px"></div>
<div class="h" style="left:3px;top:265px;width:1001px;text-align:center"><b>Radio link study 3</b></div>
<div class="c" style="left:1px;top:287px;width:488px;height:156px"></div>
<div class="c" style="left:491px;top:287px;width:515px;height:156px"></div>
<div class="c" style="left:1px;top:445px;width:488px;height:156px"></div>
<div class="c" style="left:491px;top:445px;width:515px;height:156px"></div>
<div class="c" style="left:1px;top:603px;width:1005px;height:222px"></div>
<div class="h" style="left:3px;top:289px"><a><b>WM</b></a> (1)</div>
<div class="h" style="right:5px;top:289px">(2) <a><b>Semechevo</b></a></div>
<div class="r l" style="left:5px;top:309px;width:201px">Latitude</div>
<div class="r l v" style="left:208px;top:309px;width:249px">55.153386</div>
<div class="r l" style="left:459px;top:309px;width:26px">°</div>
<div class="r k" style="left:5px;top:331px;width:201px">Longitude</div>
<div class="r k v" style="left:208px;top:331px;width:249px">36.003850</div>
<div class="r k" style="left:459px;top:331px;width:26px">°</div>
<div class="r l" style="left:5px;top:353px;width:201px">Ground elevation</div>
<div class="r l v" style="left:208px;top:353px;width:249px">218.7</div>
<div class="r l" style="left:459px;top:353px;width:26px">m</div>
<div class="r k" style="left:5px;top:375px;width:201px">Antenna height</div>
<div class="r k v" style="left:208px;top:375px;width:249px">5.0</div>
<div class="r k" style="left:459px;top:375px;width:26px">m</div>
<div class="r l" style="left:5px;top:397px;width:201px">Azimuth</div>
<div class="r l v" style="left:208px;top:397px;width:249px">35.77 TN | 25.14 MG</div>
<div class="r l" style="left:459px;top:397px;width:26px">°</div>
<div class="r k" style="left:5px;top:419px;width:201px">Tilt</div>
<div class="r k v" style="left:208px;top:419px;width:249px">0.10</div>
<div class="r k" style="left:459px;top:419px;width:26px">°</div>
<div class="r l" style="left:495px;top:309px;width:201px">Latitude</div>
<div class="r l v" style="left:698px;top:309px;width:276px">55.206519</div>
<div class="r l" style="left:976px;top:309px;width:26px">°</div>
<div class="r k" style="left:495px;top:331px;width:201px">Longitude</div>
<div class="r k v" style="left:698px;top:331px;width:276px">36.070962</div>
<div class="r k" style="left:976px;top:331px;width:26px">°</div>
<div class="r l" style="left:495px;top:353px;width:201px">Ground elevation</div>
<div class="r l v" style="left:698px;top:353px;width:276px">201.2</div>
<div class="r l" style="left:976px;top:353px;width:26px">m</div>
<div class="r k" style="left:495px;top:375px;width:201px">Antenna height</div>
<div class="r k v" style="left:698px;top:375px;width:276px">40.0</div>
<div class="r k" style="left:976px;top:375px;width:26px">m</div>
<div class="r l" style="left:495px;top:397px;width:201px">Azimuth</div>
<div class="r l v" style="left:698px;top:397px;width:276px">215.83 TN | 205.16 MG</div>
<div class="r l" style="left:976px;top:397px;width:26px">°</div>
<div class="r k" style="left:495px;top:419px;width:201px">Tilt</div>
<div class="r k v" style="left:698px;top:419px;width:276px">-0.17</div>
<div class="r k" style="left:976px;top:419px;width:26px">°</div>
<div class="h" style="left:3px;top:447px"><b>Radio system</b></div>
<div class="h" style="right:5px;top:447px"><b>Propagation</b></div>
<div class="r l" style="left:5px;top:467px;width:269px">TX power</div>
<div class="r l v" style="left:276px;top:467px;width:125px">23.01</div>
<div class="r l" style="left:403px;top:467px;width:82px">dBm</div>
<div class="r k" style="left:5px;top:489px;width:269px">TX line loss</div>
<div class="r k v" style="left:276px;top:489px;width:125px">3.00</div>
<div class="r k" style="left:403px;top:489px;width:82px">dB</div>
<div class="r l" style="left:5px;top:511px;width:269px">TX antenna gain</div>
<div class="r l v" style="left:276px;top:511px;width:125px">20.00</div>
<div class="r l" style="left:403px;top:511px;width:82px">dBi</div>
<div class="r k" style="left:5px;top:533px;width:269px">RX antenna gain</div>
<div class="r k v" style="left:276px;top:533px;width:125px">16.00</div>
<div class="r k" style="left:403px;top:533px;width:82px">dBi</div>
<div class="r l" style="left:5px;top:555px;width:269px">RX line loss</div>
<div class="r l v" style="left:276px;top:555px;width:125px">0.50</div>
<div class="r l" style="left:403px;top:555px;width:82px">dB</div>
<div class="r k" style="left:5px;top:577px;width:269px">RX sensitivity</div>
<div class="r k v" style="left:276px;top:577px;width:125px">-113.02</div>
<div class="r k" style="left:403px;top:577px;width:82px">dBm</div>
<div class="r l" style="left:495px;top:467px;width:310px">Free space loss</div>
<div class="r l v" style="left:807px;top:467px;width:133px">116.88</div>
<div class="r l" style="left:942px;top:467px;width:60px">dB</div>
<div class="r k" style="left:495px;top:489px;width:310px">Obstruction loss</div>
<div class="r k v" style="left:807px;top:489px;width:133px">8.09</div>
<div class="r k" style="left:942px;top:489px;width:60px">dB</div>
<div class="r l" style="left:495px;top:511px;width:310px">Forest loss</div>
<div class="r l v" style="left:807px;top:511px;width:133px">4.96</div>
<div class="r l" style="left:942px;top:511px;width:60px">dB</div>
<div class="r k" style="left:495px;top:533px;width:310px">Urban loss</div>
<div class="r k v" style="left:807px;top:533px;width:133px">0.00</div>
<div class="r k" style="left:942px;top:533px;width:60px">dB</div>
<div class="r l" style="left:495px;top:555px;width:310px">Statistical loss</div>
<div class="r l v" style="left:807px;top:555px;width:133px">21.19</div>
<div class="r l" style="left:942px;top:555px;width:60px">dB</div>
<div class="r k" style="left:495px;top:577px;width:310px">Total path loss</div>
<div class="r k v" style="left:807px;top:577px;width:133px">151.11</div>
<div class="r k" style="left:942px;top:577px;width:60px">dB</div>
<div class="h" style="left:3px;top:605px"><b>Performance</b></div>
<div class="r l" style="left:5px;top:625px;width:725px"><b>Distance</b></div>
<div class="r l v" style="left:732px;top:625px;width:171px"><b>7.284</b></div>
<div class="r l" style="left:905px;top:625px;width:97px"><b>km</b></div>
<div class="r k" style="left:5px;top:647px;width:725px">Precision</div>
<div class="r k v" style="left:732px;top:647px;width:171px">10.0</div>
<div class="r k" style="left:905px;top:647px;width:97px">m</div>
<div class="r l" style="left:5px;top:669px;width:725px">Frequency</div>
<div class="r l v" style="left:732px;top:669px;width:171px">2300.000</div>
<div class="r l" style="left:905px;top:669px;width:97px">MHz</div>
<div class="r k" style="left:5px;top:691px;width:725px">Equivalent Isotropically Radiated Power</div>
<div class="r k v" style="left:732px;top:691px;width:171px">10.024</div>
<div class="r k" style="left:905px;top:691px;width:97px">W</div>
<div class="r l" style="left:5px;top:713px;width:725px">System gain</div>
<div class="r l v" style="left:732px;top:713px;width:171px">168.53</div>
<div class="r l" style="left:905px;top:713px;width:97px">dB</div>
<div class="r k" style="left:5px;top:735px;width:725px">Required reliability</div>
<div class="r k v" style="left:732px;top:735px;width:171px">95.000</div>
<div class="r k" style="left:905px;top:735px;width:97px">%</div>
<div class="r l" style="left:5px;top:757px;width:725px">Received Signal</div>
<div class="r l v" style="left:732px;top:757px;width:171px">-95.60</div>
<div class="r l" style="left:905px;top:757px;width:97px">dBm</div>
<div class="r k" style="left:5px;top:779px;width:725px">Received Signal</div>
<div class="r k v" style="left:732px;top:779px;width:171px">3.72</div>
<div class="r k" style="left:905px;top:779px;width:97px">µV</div>
<div class="r l" style="left:5px;top:801px;width:725px"><b>Fade Margin</b></div>
<div class="r l v" style="left:732px;top:801px;width:171px"><b>17.42</b></div>
<div class="r l" style="left:905px;top:801px;width:97px"><b>dB</b></div>
</body></html>
